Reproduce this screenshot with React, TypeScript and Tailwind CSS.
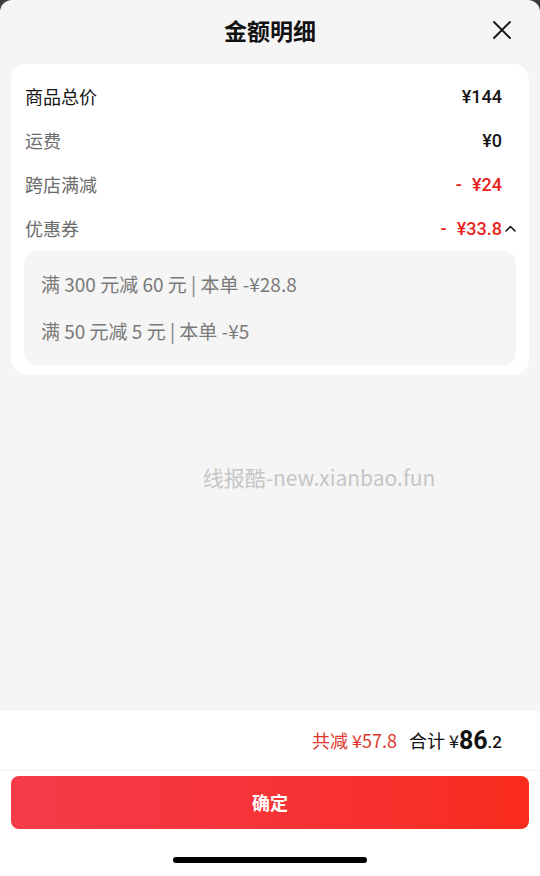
import React from "react";

const cjk = { fontFamily: '"Noto Sans CJK SC", "Noto Sans", sans-serif' };
const num = { fontFamily: 'Roboto, "Noto Sans CJK SC", sans-serif' };

function Row({ label, value, labelDark, red, chevron }: { label: string; value: string; labelDark?: boolean; red?: boolean; chevron?: boolean }) {
  return (
    <div className="flex h-[44px] items-center justify-between pl-[14px] pr-[13px]">
      <span className={`text-[18px] ${labelDark ? "text-[#151515]" : "text-[#6b6b6b]"}`} style={cjk}>
        {label}
      </span>
      <div className="flex items-center">
        {red && (
          <span className="mr-[10px] text-[18px] font-medium text-[#e8231d]" style={num}>
            -
          </span>
        )}
        <span className={`text-[18px] font-medium ${red ? "text-[#e8231d]" : "text-[#151515]"}`} style={num}>
          {value}
        </span>
        <span className="flex w-[14px] justify-end">
          {chevron && (
            <svg width="11" height="7" viewBox="0 0 11 7" fill="none">
              <path d="M1 6 L5.5 1.5 L10 6" stroke="#111" strokeWidth="1.6" strokeLinecap="round" strokeLinejoin="round" />
            </svg>
          )}
        </span>
      </div>
    </div>
  );
}

export default function App() {
  return (
    <div className="flex h-[876px] w-[540px] flex-col bg-[#3c3c3c]" style={cjk}>
      <div className="flex flex-1 flex-col overflow-hidden rounded-t-[12px] bg-[#f5f5f5]">
        <div className="relative flex h-[60px] items-center justify-center">
          <span className="text-[23px] font-bold text-[#111]">金额明细</span>
          <svg className="absolute right-[29px] top-[21px]" width="18" height="18" viewBox="0 0 18 18" fill="none">
            <path d="M1 1 L17 17 M17 1 L1 17" stroke="#111" strokeWidth="1.8" strokeLinecap="round" />
          </svg>
        </div>
        <div className="mx-[11px] mt-[4px] rounded-[16px] bg-white pb-[10px] pt-[10px]">
          <Row label="商品总价" value="¥144" labelDark />
          <Row label="运费" value="¥0" />
          <Row label="跨店满减" value="¥24" red />
          <Row label="优惠券" value="¥33.8" red chevron />
          <div className="mx-[13px] mt-px rounded-[12px] bg-[#f5f5f5] px-[17px] py-[10px] text-[19px] text-[#7a7a7a]">
            <div className="flex h-[47px] items-center">满 300 元减 60 元 | 本单 -¥28.8</div>
            <div className="flex h-[47px] items-center">满 50 元减 5 元 | 本单 -¥5</div>
          </div>
        </div>
        <div className="mt-[87px] flex justify-center pl-[98px] text-[21px] text-[#c6c6c6]">线报酷-new.xianbao.fun</div>
        <div className="flex-1" />
        <div className="h-[165px] bg-white">
          <div className="flex h-[60px] items-center justify-end border-b border-[#f2f2f2] pr-[38px]">
            <span className="text-[18px] text-[#e0362c]">共减 ¥57.8</span>
            <span className="ml-[12px] text-[18px] text-[#111]">合计 ¥</span>
            <span className="text-[25px] font-bold leading-none text-[#111]" style={num}>86</span>
            <span className="mt-[4px] text-[17px] font-medium text-[#111]" style={num}>.2</span>
          </div>
          <div className="mx-[11px] mt-[5px] flex h-[53px] items-center justify-center rounded-[8px] bg-gradient-to-r from-[#f53a4a] to-[#f92b1c]">
            <span className="text-[18px] font-semibold text-white">确定</span>
          </div>
          <div className="mt-[28px] flex justify-center">
            <div className="h-[6px] w-[194px] rounded-full bg-black" />
          </div>
        </div>
      </div>
    </div>
  );
}
